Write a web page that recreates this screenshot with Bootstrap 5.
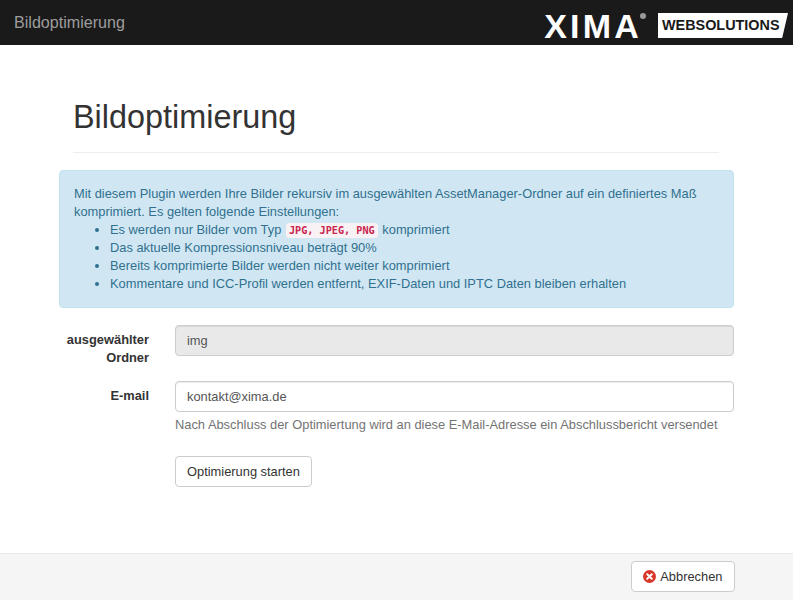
<!DOCTYPE html>
<html>
<head>
  <meta charset="UTF-8">
  <title>Bildoptimierung</title>
  <link href="https://cdn.jsdelivr.net/npm/bootstrap@5.3.0/dist/css/bootstrap.min.css" rel="stylesheet">
  <style>
    body { font-family: "Liberation Sans", Arial, sans-serif; font-size: 13px; color: #333; }
    .page-wrap { min-height: 600px; }
    .top-bar { height: 45px; background: #1a1a1a; padding: 0 5px 0 14px; }
    .top-title { font-size: 16.1px; color: #9d9d9d; }
    .logo-group { padding-top: 6px; }
    .logo-word { font-size: 34px; font-weight: 700; color: #fff; letter-spacing: 3.2px; line-height: 1; }
    .logo-reg { width: 6px; height: 6px; border-radius: 50%; background: #999; margin: 0 0 20px -2px; }
    .logo-tag { background: #fff; color: #1a1a1a; font-size: 14.4px; font-weight: 700; line-height: 24px; height: 25px; width: 130px; padding-left: 4px; margin-left: 12px; clip-path: polygon(0 0, 100% 0, 95.5% 100%, 0 100%); }
    .main-area { padding: 0 59px; }
    .page-title { margin: 53px 15px 0 14px; padding-bottom: 16px; border-bottom: 1px solid #eee; font-size: 32.4px; font-weight: 400; line-height: 38px; color: #333; }
    .info-box { margin: 17px 0 17px; padding: 14px 14px 14px; background: #d0e7f3; border: 1px solid #bfe4ef; border-radius: 4px; color: #31708f; line-height: 18px; font-size: 12.87px; }
    .info-box ul { margin: 0; padding-left: 36px; }
    .info-box code { font-family: "DejaVu Sans Mono", monospace; font-size: 10.2px; font-weight: 700; line-height: 1; color: #c7254e; background: #f9f2f4; padding: 2px 3px; border-radius: 3px; margin: 0 1px; }
    .form-line { display: flex; }
    .form-lab { width: 90px; flex: none; text-align: right; font-weight: 700; font-size: 12.87px; line-height: 18px; padding-top: 6px; color: #333; }
    .form-field { margin-left: 26px; flex: 1; }
    .row-gap { margin-bottom: 14px; }
    .field-box { height: 31px; font-size: 12.87px; padding: 5px 11px; border-radius: 4px; border: 1px solid #ccc; color: #555; box-shadow: inset 0 1px 1px rgba(0,0,0,.075); }
    .field-box:disabled { background: #e9e9e9; color: #555; }
    .help-line { color: #737373; font-size: 12.87px; line-height: 18px; margin-top: 4px; }
    .plain-btn { height: 31px; font-size: 12.87px; padding: 5px 11px; border: 1px solid #ccc; background: #fff; color: #333; border-radius: 4px; }
    .start-btn { margin-top: 22px; }
    .bottom-bar { height: 47px; background: #f5f5f5; border-top: 1px solid #e8e8e8; padding: 7px 58px 0 0; }
    .cancel-ico { width: 13px; height: 13px; margin-right: 4px; vertical-align: -2px; }
    .cancel-btn { padding: 5px 11.5px; }
  </style>
</head>
<body>
  <div class="page-wrap d-flex flex-column">
    <!-- Top bar -->
    <div class="top-bar d-flex align-items-center justify-content-between">
      <span class="top-title">Bildoptimierung</span>
      <div class="logo-group d-flex align-items-center">
        <span class="logo-word">XIMA</span>
        <span class="logo-reg"></span>
        <span class="logo-tag">WEBSOLUTIONS</span>
      </div>
    </div>

    <div class="main-area">
      <h1 class="page-title">Bildoptimierung</h1>

      <div class="info-box">
        Mit diesem Plugin werden Ihre Bilder rekursiv im ausgewählten AssetManager-Ordner auf ein definiertes Maß komprimiert. Es gelten folgende Einstellungen:
        <ul>
          <li>Es werden nur Bilder vom Typ <code>JPG, JPEG, PNG</code> komprimiert</li>
          <li>Das aktuelle Kompressionsniveau beträgt 90%</li>
          <li>Bereits komprimierte Bilder werden nicht weiter komprimiert</li>
          <li>Kommentare und ICC-Profil werden entfernt, EXIF-Daten und IPTC Daten bleiben erhalten</li>
        </ul>
      </div>

      <form onsubmit="return false">
        <div class="form-line row-gap">
          <label class="form-lab">ausgewählter Ordner</label>
          <div class="form-field"><input type="text" class="form-control field-box" value="img" disabled></div>
        </div>
        <div class="form-line">
          <label class="form-lab">E-mail</label>
          <div class="form-field">
            <input type="text" class="form-control field-box" value="kontakt@xima.de">
            <div class="help-line">Nach Abschluss der Optimiertung wird an diese E-Mail-Adresse ein Abschlussbericht versendet</div>
            <button type="submit" class="btn plain-btn start-btn">Optimierung starten</button>
          </div>
        </div>
      </form>
    </div>

    <!-- Footer -->
    <div class="bottom-bar mt-auto d-flex justify-content-end">
      <button type="button" class="btn plain-btn cancel-btn">
        <svg class="cancel-ico" viewBox="0 0 16 16"><circle cx="8" cy="8" r="8" fill="#d9362b"/><path d="M5.2 5.2l5.6 5.6M10.8 5.2l-5.6 5.6" stroke="#fff" stroke-width="2.4" stroke-linecap="round"/></svg>Abbrechen
      </button>
    </div>
  </div>
  <script src="https://cdn.jsdelivr.net/npm/bootstrap@5.3.0/dist/js/bootstrap.bundle.min.js"></script>
</body>
</html>
